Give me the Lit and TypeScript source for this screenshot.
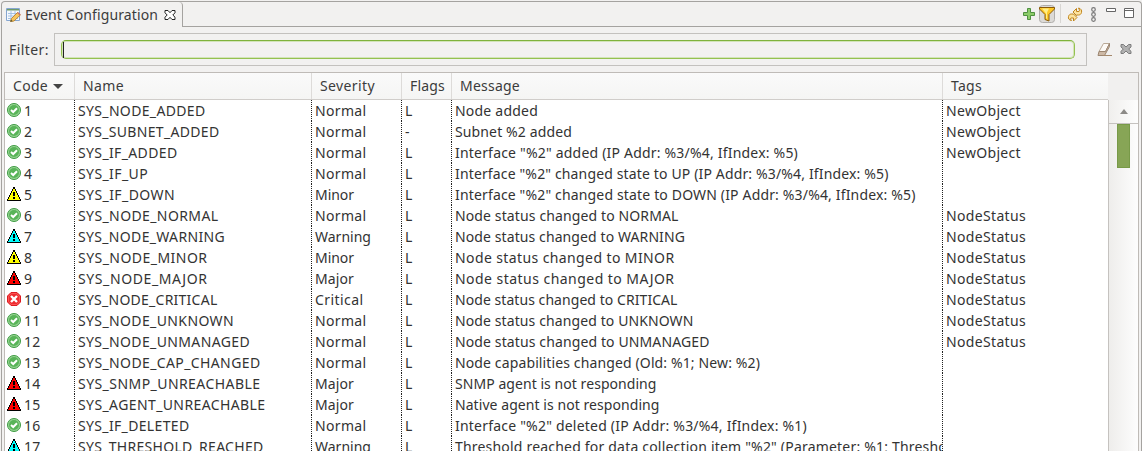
import { LitElement, html, css, svg } from "lit";
import { customElement, property } from "lit/decorators.js";

type Kind = "ok" | "minor" | "warning" | "major" | "critical";

/** Text run tracked so that it occupies a fixed advance width. */
@customElement("fit-text")
class FitText extends LitElement {
  @property() text = "";
  @property({ type: Number }) w = 0;
  static styles = css`
    :host { display: block; white-space: pre; }
    span { display: inline-block; }
  `;
  firstUpdated() {
    const span = this.renderRoot.querySelector("span") as HTMLElement;
    const natural = span.getBoundingClientRect().width;
    if (this.w && natural) span.style.letterSpacing = (this.w - natural) / this.text.length + "px";
  }
  render() {
    return html`<span>${this.text}</span>`;
  }
}

const tri = (fill: string) => svg`
  <path d="M6 0h2v2h1v2h1v2h1v2h1v2h1v2h1v2H0v-2h1v-2h1V8h1V6h1V4h1V2h1z" fill="#000" shape-rendering="crispEdges"/>
  <path d="M6 2h2v2h1v2h1v2h1v2h1v2h1v1H1v-1h1v-2h1V8h1V6h1V4h1z" fill=${fill} shape-rendering="crispEdges"/>
  <path d="M6 5h2v4H6zM6 10h2v2H6z" fill="#000" shape-rendering="crispEdges"/>`;

const statusIcon = (k: Kind) => {
  switch (k) {
    case "ok":
      return svg`
        <circle cx="7" cy="7" r="6.500" fill="#9ad596" stroke="#3d9a42"/>
        <circle cx="7" cy="7" r="5" fill="#58b458"/>
        <path d="M4 7 6.200 9 10 5.200" fill="none" stroke="#fff" stroke-width="2"/>`;
    case "critical":
      return svg`
        <path d="M4 .5h6L13.500 4v6L10 13.500H4L.5 10V4Z" fill="#ee2b2f" stroke="#dc1a20"/>
        <path d="M4.400 1.500h5.200l2.900 2.900v5.200l-2.900 2.900H4.400L1.500 9.600V4.400Z" fill="none" stroke="#f66" stroke-width=".7"/>
        <path d="M4 4 10 10M10 4 4 10" stroke="#fff" stroke-width="2.400"/>`;
    case "minor":
      return tri("#ffff00");
    case "warning":
      return tri("#00ffff");
    case "major":
      return tri("#ff0000");
  }
};

const SEV: Record<string, number> = { Normal: 51.5, Minor: 39, Warning: 56, Major: 39, Critical: 48.5 };
const TAG: Record<string, number> = { NewObject: 75, NodeStatus: 80 };

type Row = [Kind, string, number, string, string, string, number, string];
const ROWS: Row[] = [
  ["ok", "SYS_NODE_ADDED", 127.5, "Normal", "L", "Node added", 83, "NewObject"],
  ["ok", "SYS_SUBNET_ADDED", 141.5, "Normal", "-", "Subnet %2 added", 117, "NewObject"],
  ["ok", "SYS_IF_ADDED", 99.5, "Normal", "L", 'Interface "%2" added (IP Addr: %3/%4, IfIndex: %5)', 343, "NewObject"],
  ["ok", "SYS_IF_UP", 70, "Normal", "L", 'Interface "%2" changed state to UP (IP Addr: %3/%4, IfIndex: %5)', 433.5, ""],
  ["minor", "SYS_IF_DOWN", 97, "Minor", "L", 'Interface "%2" changed state to DOWN (IP Addr: %3/%4, IfIndex: %5)', 460.5, ""],
  ["ok", "SYS_NODE_NORMAL", 140.5, "Normal", "L", "Node status changed to NORMAL", 223.5, "NodeStatus"],
  ["warning", "SYS_NODE_WARNING", 147, "Warning", "L", "Node status changed to WARNING", 230, "NodeStatus"],
  ["minor", "SYS_NODE_MINOR", 129.5, "Minor", "L", "Node status changed to MINOR", 219.5, "NodeStatus"],
  ["major", "SYS_NODE_MAJOR", 129.5, "Major", "L", "Node status changed to MAJOR", 219.5, "NodeStatus"],
  ["critical", "SYS_NODE_CRITICAL", 139.5, "Critical", "L", "Node status changed to CRITICAL", 222.5, "NodeStatus"],
  ["ok", "SYS_NODE_UNKNOWN", 156, "Normal", "L", "Node status changed to UNKNOWN", 238.5, "NodeStatus"],
  ["ok", "SYS_NODE_UNMANAGED", 172, "Normal", "L", "Node status changed to UNMANAGED", 254.5, "NodeStatus"],
  ["ok", "SYS_NODE_CAP_CHANGED", 182.5, "Normal", "L", "Node capabilities changed (Old: %1; New: %2)", 305, ""],
  ["major", "SYS_SNMP_UNREACHABLE", 182.5, "Major", "L", "SNMP agent is not responding", 201.5, ""],
  ["major", "SYS_AGENT_UNREACHABLE", 187.5, "Major", "L", "Native agent is not responding", 204.5, ""],
  ["ok", "SYS_IF_DELETED", 111.5, "Normal", "L", 'Interface "%2" deleted (IP Addr: %3/%4, IfIndex: %1)', 352, ""],
  ["warning", "SYS_THRESHOLD_REACHED", 185.5, "Warning", "L", 'Threshold reached for data collection item "%2" (Parameter: %1; Thresho', 492, ""],
];

@customElement("app-root")
class AppRoot extends LitElement {
  static styles = css`
    :host { display: block; width: 1142px; height: 451px; overflow: hidden; background: #f2f1f0; font: 14px/21px "Noto Sans", sans-serif; color: #3c3c3c; }
    * { box-sizing: border-box; }
    svg { display: block; flex: none; }
    .view { height: 451px; border: 1px solid #a5a3a0; border-bottom: 0; border-radius: 4px 4px 0 0; margin-top: 1px; margin-left: 1px; padding-right: 2px; display: flex; flex-direction: column; }
    .bar { display: flex; height: 25px; flex: none; margin-right: -2px; }
    .tab { width: 181px; flex: none; display: flex; align-items: center; padding: 0 0 0 4px; border-right: 1px solid #a5a3a0; border-radius: 0 4px 0 0; }
    .tab fit-text { margin-left: 4px; width: 139px; }
    .tools { flex: 1; display: flex; border-bottom: 1px solid #a5a3a0; justify-content: flex-end; padding-right: 5px; }
    .filter { height: 45px; flex: none; display: flex; padding-left: 7px; align-items: center; }
    .filter fit-text { width: 45px; }
    .frame { width: 1033px; height: 33px; border: 1px solid #c3c1be; padding: 6px 11px 7px 6px; }
    .input { height: 19px; border: 1px solid #94c14f; border-top-color: #7fb23c; border-radius: 5px; background: #f2f1f0; box-shadow: inset 0 0 0 1px #d3e4b9; padding: 1px 0 0 1px; }
    .caret { width: 1px; height: 16px; background: #222; }
    .fi { display: flex; padding-left: 10px; gap: 6px; }
    .table { flex: 1; min-height: 0; margin-left: 2px; border: 1px solid #bfbbb7; border-bottom: 0; display: flex; background: #fff; }
    .main { flex: 1; min-width: 0; display: flex; flex-direction: column; }
    .cols { display: grid; grid-template-columns: 70px 237px 90px 50px 491px 1fr; }
    .head { height: 27px; flex: none; background: linear-gradient(#fafafa, #f5f5f4); border-bottom: 1px solid #d0cdca; }
    .head div { padding: 2px 0 0 8px; border-right: 1px solid #dddbd9; display: flex; }
    .head div:last-child { border-right: 0; }
    .rows { flex: 1; min-height: 0; overflow: hidden; color: #333; }
    .rows .cols { height: 21px; }
    .lined { display: grid; grid-template-columns: 1fr 1px; overflow: hidden; height: 21px; }
    .lined > i { background: repeating-linear-gradient(#222 0 1px, #fff 1px 2px); }
    .code { display: flex; padding-left: 2px; align-items: flex-start; }
    .code svg { margin-top: 3px; }
    .code fit-text { margin-left: 3px; }
    .cell { padding-left: 3px; overflow: hidden; height: 21px; }
    .scroll { width: 30px; flex: none; display: flex; flex-direction: column; align-items: stretch; }
    .corner { height: 27px; background: #f1f0ef; }
    .up { height: 24px; border-left: 1px solid #c5c2bf; border-bottom: 1px solid #c5c2bf; background: linear-gradient(90deg, #f0efed, #fdfdfd); display: flex; justify-content: center; align-items: center; }
    .track { flex: 1; border-left: 1px solid #c5c2bf; background: linear-gradient(90deg, #eeedeb, #fdfdfd); padding-left: 8px; }
    .thumb { width: 13px; height: 44px; background: #87a556; border: 1px solid #789a48; }
  `;

  head(label: string, w: number, sort = false) {
    return html`<div>
      <fit-text .text=${label} .w=${w}></fit-text>
      ${sort ? html`<svg width="17" height="21"><path d="M5 9h10l-5 5z" fill="#444" /></svg>` : ""}
    </div>`;
  }

  cell(text: string, w: number, line = true) {
    return html`<div class="lined"><div class="cell"><fit-text .text=${text} .w=${w}></fit-text></div>${line ? html`<i></i>` : ""}</div>`;
  }

  row(r: Row, i: number) {
    const n = String(i + 1);
    return html`<div class="cols">
      <div class="lined">
        <div class="code"><svg width="14" height="14">${statusIcon(r[0])}</svg><fit-text .text=${n} .w=${n.length * 8.3}></fit-text></div>
        <i></i>
      </div>
      ${this.cell(r[1], r[2])} ${this.cell(r[3], SEV[r[3]])} ${this.cell(r[4], r[4] === "L" ? 8 : 5)}
      ${this.cell(r[5], r[6])} ${this.cell(r[7], TAG[r[7]] ?? 0, false)}
    </div>`;
  }

  render() {
    return html`<div class="view">
      <div class="bar">
        <div class="tab">
          <svg width="15" height="16">
            <path d="M.5 1.500h13v12H.5z" fill="#f4f8fd" stroke="#86a6d0" />
            <path d="M1 2h12v1.500H1z" fill="#6f9a6a" />
            <path d="M2 6.500h10M2 9h10M2 11.500h10M5 4v9M9 4v9" stroke="#9dbbe2" stroke-width=".9" />
            <path d="M4.500 14.500 5.500 11.500 11.500 5.500l2.800 2.500L8 14Z" fill="#f6c45c" stroke="#b9822e" stroke-width=".9" />
            <path d="M11.500 5.500 14.300 8" stroke="#c9736a" stroke-width="1.500" />
            <path d="M4.300 14.700 5 12.500 6.700 14.200Z" fill="#553" />
          </svg>
          <fit-text text="Event Configuration" .w=${133}></fit-text>
          <svg width="12" height="12" viewBox="0 0 12 12">
            <path d="M1 1.500h3l2 2.200 2-2.200h3v2.300L8.800 6 11 8.200v2.300H8L6 8.300 4 10.500H1V8.200L3.200 6 1 3.800Z" fill="#fff" stroke="#222" />
          </svg>
        </div>
        <div class="tools">
          <svg width="115" height="24" viewBox="1021 2 115 24">
            <path d="M1027.500 8.500h3v4h4v3h-4v4h-3v-4h-4v-3h4z" fill="#8ccc69" stroke="#4f9040" />
            <rect x="1039.500" y="5.500" width="15" height="17" rx="3" fill="#dcdad7" stroke="#b0aeab" />
            <path d="M1039.500 7.500h15v1.500l-5.500 5.500v6.500l-4-1.500v-5L1039.500 9z" fill="#ffc928" stroke="#8a5a08" />
            <path d="M1042 8.500h7l-2 4v6h-1v-5z" fill="#fff08a" />
            <path d="M1060.500 4v19" stroke="#d8d6d3" />
            <g fill="#fce3a0" stroke="#c0851c" stroke-linejoin="round">
              <path d="M1073 12 1076.500 8.500V11.500h2.500c.8-.8.500-2-.5-3.500 2.500.5 3.500 2.500 3 4.500-.3 1.500-1.500 2.500-3 2.500h-2v.500z" />
              <path d="M1077 17.500 1073.500 21V18h-2.500c-.8.200-.5 1.500.5 2.500-2.500-.3-3.500-2-3-4 .3-1.500 1.500-2.500 3-2.500h2v0z" />
            </g>
            <g fill="none" stroke="#777" stroke-width="1.200">
              <circle cx="1093.500" cy="9.500" r="1.800" /><circle cx="1093.500" cy="14.500" r="1.800" /><circle cx="1093.500" cy="19.500" r="1.800" />
            </g>
            <path d="M1106.500 8.500h9v3h-9z" fill="#fff" stroke="#666" />
            <path d="M1124.500 8.500h9v9h-9zM1124.500 10.500h9" fill="#fff" stroke="#666" />
          </svg>
        </div>
      </div>
      <div class="filter">
        <fit-text text="Filter:" .w=${40}></fit-text>
        <div class="frame"><div class="input"><div class="caret"></div></div></div>
        <div class="fi">
          <svg width="17" height="16">
            <path d="M6.500 1.500h6l-4 8h-6.500z" fill="#fdfaf6" stroke="#b9a996" />
            <path d="M2 9.500h6.500l4-8v3l-5 9H1z" fill="#cdb9a6" stroke="#9c8671" />
            <path d="M6 13.500h9" stroke="#a5896d" />
          </svg>
          <svg width="12" height="14">
            <path d="M1 2.500h2.500l2.500 2.500 2.500-2.500H11V5L8.700 7 11 9.300v2.200H8.500L6 9l-2.500 2.500H1V9.300L3.300 7 1 5z" fill="#b0b0b0" stroke="#7c7c7c" />
          </svg>
        </div>
      </div>
      <div class="table">
        <div class="main">
          <div class="cols head">
            ${this.head("Code", 35, true)} ${this.head("Name", 41)} ${this.head("Severity", 55)}
            ${this.head("Flags", 35)} ${this.head("Message", 60)} ${this.head("Tags", 31)}
          </div>
          <div class="rows">${ROWS.map((r, i) => this.row(r, i))}</div>
        </div>
        <div class="scroll">
          <div class="corner"></div>
          <div class="up"><svg width="8" height="5"><path d="M0 5 4 0 8 5z" fill="#8c8a87" /></svg></div>
          <div class="track"><div class="thumb"></div></div>
        </div>
      </div>
    </div>`;
  }
}
